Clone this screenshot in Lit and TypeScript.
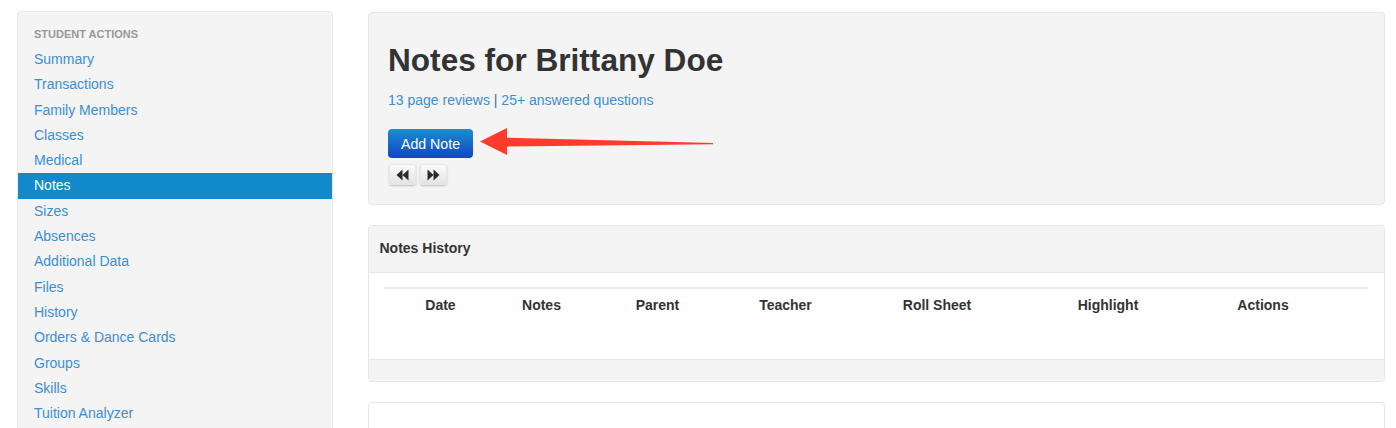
import { LitElement, html, css, svg } from "lit";
import { customElement } from "lit/decorators.js";

const LINKS = ["Summary","Transactions","Family Members","Classes","Medical","Notes","Sizes","Absences","Additional Data","Files","History","Orders & Dance Cards","Groups","Skills","Tuition Analyzer"];
const COLS = ["Date","Notes","Parent","Teacher","Roll Sheet","Highlight","Actions"];

@customElement("app-root")
export class AppRoot extends LitElement {
  static styles = css`
    :host { display: block; height: 428px; overflow: hidden; position: relative; background: #fff;
      font-family: "Liberation Sans", Arial, sans-serif; font-size: 14px; color: #333; }
    .page { display: flex; gap: 34px; padding: 11px 11px 0 17px; align-items: flex-start; box-sizing: border-box; }
    .side { width: 316px; flex: none; box-sizing: border-box; background: #f4f4f4; border: 1px solid #e8e8e8; border-radius: 4px; padding: 15px 0 40px; }
    .side h4 { margin: 0; padding: 0 16px; font-size: 11px; line-height: 14px; font-weight: 700; color: #999; height: 20px; text-transform: uppercase; }
    .side a { display: block; height: 25.3px; line-height: 25.3px; padding: 0 16px; color: #3a8fd6; font-size: 14px; }
    .side a.on { background: #118acb; color: #fff; }
    .main { flex: 1; min-width: 0; display: flex; flex-direction: column; gap: 20px; margin-left: 1px; padding-top: 1px; }
    .panel { box-sizing: border-box; border: 1px solid #e6e6e6; border-radius: 4px; }
    .hero { height: 193px; background: #f4f4f4; padding: 26px 19px 0; }
    h1 { margin: 0; font-size: 31.6px; line-height: 42px; font-weight: 700; color: #333; }
    .sub { margin-top: 9px; line-height: 20px; font-size: 14px; color: #3a8fd6; }
    .sub span { color: #3a6f9e; }
    .add { display: block; margin-top: 19px; width: 85px; height: 29px; box-sizing: border-box; border: 0; border-radius: 4px; color: #fff; padding: 0; font: 14.2px "Liberation Sans", Arial, sans-serif;
      background: linear-gradient(#1a8ecf, #1444c4); }
    .pager { display: flex; gap: 4px; margin-top: 6px; padding-left: 1px; }
    .pager button { width: 27px; height: 21px; padding: 0; border: 1px solid #e8e8e8; border-radius: 3px; background: linear-gradient(#fbfbfb, #e4e4e4); box-shadow: 0 1px 2px rgba(0,0,0,.22); display: flex; align-items: center; justify-content: center; }
    .pager svg { width: 13px; height: 12px; display: block; }
    .hist { height: 157px; display: flex; flex-direction: column; overflow: hidden; }
    .hist header { height: 47px; flex: none; box-sizing: border-box; background: #f4f4f4; border-bottom: 1px solid #e6e6e6; padding: 0 10.5px; font-weight: 700; font-size: 14px; line-height: 45px; color: #333; }
    .body { flex: 1; padding: 14px 16px 0 15px; }
    .head { display: grid; grid-template-columns: 113px 89px 143px 113px 190px 152px 158px 26px; border-top: 2px solid #eee; font-weight: 700; font-size: 14px; line-height: 33px; text-align: center; color: #333; }
    .hist footer { height: 22px; flex: none; box-sizing: border-box; background: #f4f4f4; border-top: 1px solid #e6e6e6; }
    .next { height: 120px; }
    .arrow { position: absolute; left: 470px; top: 120px; width: 250px; height: 40px; }
  `;

  render() {
    return html`<div class="page">
      <nav class="side">
        <h4>Student Actions</h4>
        ${LINKS.map(l => html`<a class=${l === "Notes" ? "on" : ""}>${l}</a>`)}
      </nav>
      <div class="main">
        <section class="panel hero">
          <h1>Notes for Brittany Doe</h1>
          <div class="sub">13 page reviews <span>|</span> 25+ answered questions</div>
          <button class="add">Add Note</button>
          <div class="pager">
            <button aria-label="Previous"><svg viewBox="0 0 13 12"><path d="M6.5 0.5V11.5L0.5 6Z M12.5 0.5V11.5L6.5 6Z" fill="#2b2b2b"/></svg></button>
            <button aria-label="Next"><svg viewBox="0 0 13 12"><path d="M0.5 0.5V11.5L6.5 6Z M6.5 0.5V11.5L12.5 6Z" fill="#2b2b2b"/></svg></button>
          </div>
        </section>
        <section class="panel hist">
          <header>Notes History</header>
          <div class="body"><div class="head">${COLS.map(c => html`<div>${c}</div>`)}</div></div>
          <footer></footer>
        </section>
        <section class="panel next"></section>
      </div>
    </div>
    <svg class="arrow" viewBox="0 0 250 40">${svg`<path d="M10 21.5L37 8V17.8L243 23V24.2L37 26.5V35Z" fill="#ff3b2b"/>`}</svg>`;
  }
}
